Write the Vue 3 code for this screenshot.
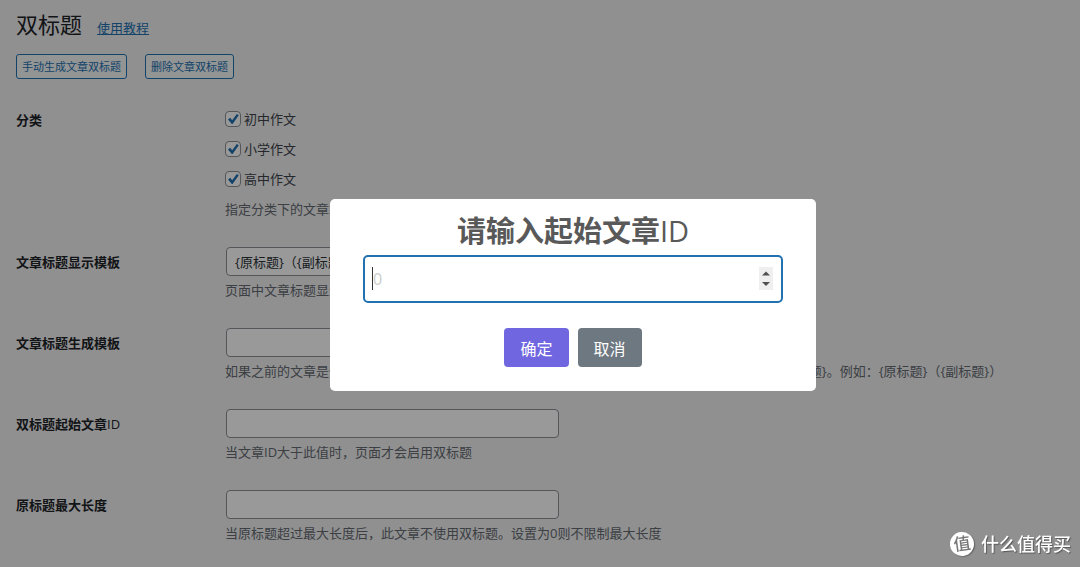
<script setup>
import { ref } from 'vue'

const categories = ref([
  { id: 'junior', name: '初中作文', checked: true },
  { id: 'primary', name: '小学作文', checked: true },
  { id: 'senior', name: '高中作文', checked: true },
])

const fields = ref([
  {
    id: 'display-template',
    label: '文章标题显示模板',
    value: '{原标题}（{副标题}）',
    hint: '页面中文章标题显示的模板',
  },
  {
    id: 'generate-template',
    label: '文章标题生成模板',
    value: '',
    hint: '如果之前的文章是使用其他方式生成的双标题，请在此填写当时的标题模板，必包含 {原标题} 和 {副标题}。例如：{原标题}（{副标题}）',
  },
  {
    id: 'start-id',
    label: '双标题起始文章',
    suffix: 'ID',
    value: '',
    hint: '当文章ID大于此值时，页面才会启用双标题',
  },
  {
    id: 'max-length',
    label: '原标题最大长度',
    value: '',
    hint: '当原标题超过最大长度后，此文章不使用双标题。设置为0则不限制最大长度',
  },
])

const startId = ref('')
</script>

<template>
  <main class="page">
    <header class="heading">
      <h1>双标题</h1>
      <a href="#">使用教程</a>
    </header>
    <div class="actions">
      <button type="button">手动生成文章双标题</button>
      <button type="button">删除文章双标题</button>
    </div>

    <form class="settings" @submit.prevent>
      <div class="row" role="group" aria-labelledby="category-label">
        <span id="category-label" class="label">分类</span>
        <div class="control">
          <label v-for="c in categories" :key="c.id" class="check">
            <input v-model="c.checked" type="checkbox" />
            <svg class="tick" viewBox="0 0 16 16" aria-hidden="true">
              <path d="M3 8.4 L5.2 6.8 L7.2 9.2 L11.8 3 L13.8 4.2 L7.6 13 L6.8 13 Z" />
            </svg>
            <span>{{ c.name }}</span>
          </label>
          <p class="hint">指定分类下的文章才会启用</p>
        </div>
      </div>
      <div v-for="f in fields" :key="f.id" class="row">
        <label class="label" :for="f.id">{{ f.label }}<span v-if="f.suffix">{{ f.suffix }}</span></label>
        <div class="control">
          <input :id="f.id" v-model="f.value" class="text" type="text" />
          <p class="hint">{{ f.hint }}</p>
        </div>
      </div>
    </form>
  </main>

  <div class="overlay">
    <section class="dialog" role="dialog" aria-modal="true" aria-labelledby="dialog-title">
      <h2 id="dialog-title"><label for="start-value">请输入起始文章<span>ID</span></label></h2>
      <div class="number">
        <input id="start-value" v-model="startId" type="number" placeholder="0" />
        <i class="caret"></i>
        <span class="spinner" aria-hidden="true">
          <svg viewBox="0 0 14 23">
            <path d="M3 8.5 L7 4.5 L11 8.5 Z M3 15 L7 19 L11 15 Z" />
          </svg>
        </span>
      </div>
      <div class="buttons">
        <button type="button" class="confirm">确定</button>
        <button type="button" class="cancel">取消</button>
      </div>
    </section>
  </div>

  <div class="watermark">
    <span class="badge">值</span>
    <span>什么值得买</span>
  </div>
</template>

<style>
body {
  background: #f0f0f1;
  overflow: hidden;
}
#app {
  font-family: "Open Sans", "Noto Sans CJK SC", sans-serif;
  font-size: 13px;
  line-height: 20px;
  color: #3c434a;
}
</style>

<style scoped>
* {
  box-sizing: border-box;
}
h1,
h2,
p {
  margin: 0;
}
button,
input {
  font-family: inherit;
  margin: 0;
}
.page {
  padding: 10px 16px;
}
.heading {
  display: flex;
  align-items: baseline;
  gap: 15px;
}
h1 {
  font-size: 22px;
  font-weight: 400;
  line-height: 28px;
  color: #1d2327;
}
.heading a {
  color: #2271b1;
}
.actions {
  display: flex;
  gap: 18px;
  margin-top: 16px;
}
.actions button {
  height: 25px;
  padding: 0 5px;
  border: 1px solid #2271b1;
  border-radius: 3px;
  background: #f6f7f7;
  color: #2271b1;
  font-size: 11px;
  line-height: 20px;
}
.settings {
  display: flex;
  flex-direction: column;
  gap: 28px;
  margin-top: 30px;
}
.row {
  display: grid;
  grid-template-columns: 209px 1fr;
}
.label {
  padding-top: 5px;
  font-weight: 700;
  color: #1d2327;
}
.label span {
  font-weight: 500;
}
.row:first-child .label {
  padding-top: 1px;
}
.control {
  white-space: nowrap;
}
.check {
  position: relative;
  display: flex;
  align-items: center;
  gap: 3px;
  width: max-content;
  margin-bottom: 10px;
}
.check input {
  appearance: none;
  width: 16px;
  height: 16px;
  border: 1px solid #8c8f94;
  border-radius: 4px;
  background: #fff;
}
.tick {
  position: absolute;
  left: 0;
  top: 2px;
  width: 16px;
  height: 16px;
  fill: #2271b1;
  visibility: hidden;
}
.check input:checked + .tick {
  visibility: visible;
}
.text {
  display: block;
  width: 333px;
  height: 29px;
  margin-left: 1px;
  padding: 0 8px;
  border: 1px solid #8c8f94;
  border-radius: 4px;
  background: #fff;
  color: #2c3338;
  font-size: 13px;
}
.hint {
  color: #646970;
}
.text + .hint {
  margin-top: 4px;
}
.overlay {
  position: fixed;
  inset: 0;
  display: flex;
  align-items: center;
  justify-content: center;
  padding: 23px 0 0 66px;
  background: rgba(0, 0, 0, 0.4);
}
.dialog {
  width: 486px;
  max-width: 100%;
  padding: 12px 33px 24px;
  border-radius: 5px;
  background: #fff;
}
h2 {
  margin-bottom: 4px;
  font-size: 29px;
  font-weight: 700;
  line-height: 40px;
  color: #595959;
  text-align: center;
}
h2 span {
  font-weight: 500;
}
.number {
  position: relative;
}
.number input {
  display: block;
  width: 100%;
  height: 48px;
  padding: 0 8px;
  border: 2px solid #2271b1;
  border-radius: 5px;
  outline: none;
  background: #fff;
  color: #2c3338;
  font-size: 16px;
  appearance: textfield;
}
.number input::placeholder {
  color: #ccc;
}
.number input::-webkit-inner-spin-button {
  appearance: none;
}
.caret {
  position: absolute;
  left: 9px;
  top: 12px;
  width: 1px;
  height: 23px;
  background: #333;
}
.spinner {
  position: absolute;
  right: 10px;
  top: 12px;
  width: 14px;
  height: 23px;
  background: #efefef;
}
.spinner svg {
  display: block;
  fill: #505050;
}
.buttons {
  display: flex;
  justify-content: center;
  gap: 9px;
  margin-top: 25px;
}
.buttons button {
  height: 39px;
  padding: 0 16px;
  border: 0;
  border-radius: 4px;
  color: #fff;
  font-size: 16px;
}
.confirm {
  background: #7066e0;
}
.cancel {
  background: #6e7881;
}
.watermark {
  position: fixed;
  right: 9px;
  bottom: 11px;
  display: flex;
  align-items: center;
  gap: 7px;
  color: #fff;
  font-size: 18px;
  font-weight: 500;
  line-height: 24px;
  text-shadow: 1px 1px 1px rgba(0, 0, 0, 0.4);
}
.badge {
  width: 24px;
  height: 24px;
  border-radius: 50%;
  background: #fff;
  box-shadow: 1px 1px 1px rgba(0, 0, 0, 0.3);
  color: #777;
  text-align: center;
  text-shadow: none;
  font-size: 17px;
  transform: rotate(-8deg);
}
</style>
